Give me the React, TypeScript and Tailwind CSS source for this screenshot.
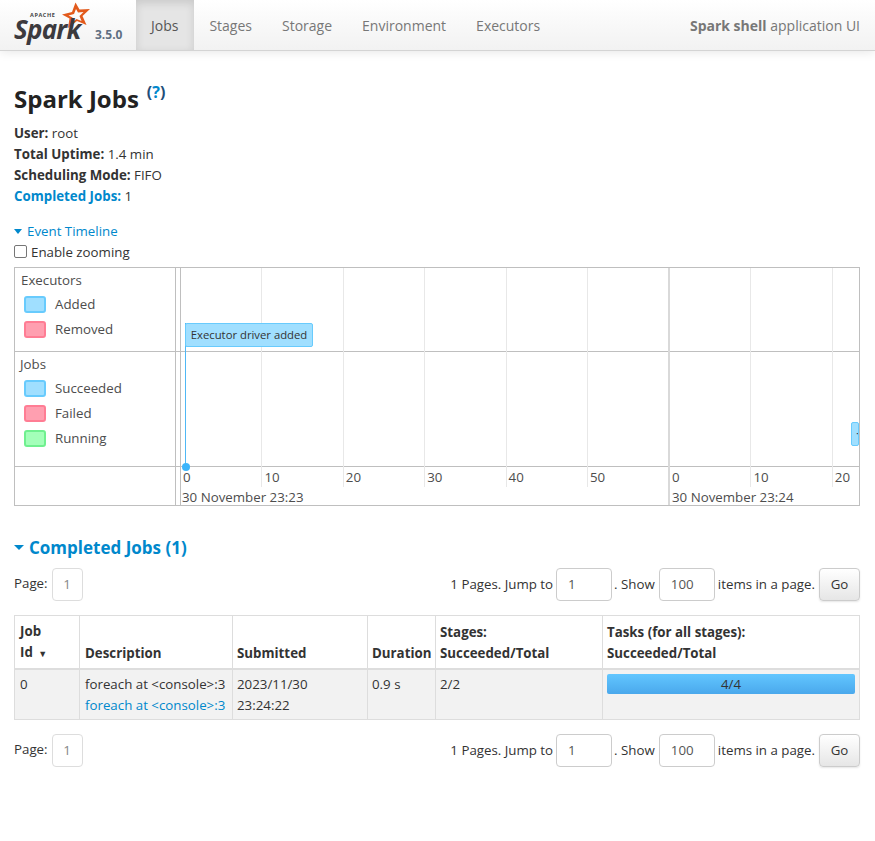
const NAV_ITEMS = ['Stages', 'Storage', 'Environment', 'Executors']

const FONT = "font-['Open_Sans','Noto_Sans',sans-serif]"

function SparkLogo() {
  return (
    <div className="relative w-[124px] h-[50px] shrink-0">
      <svg className="absolute left-[60px] top-[1px]" width="31" height="29" viewBox="0 0 31 29">
        <path
          d="M15.5 1.5 L19.5 8.5 L30 8 L22.5 15 L26.5 24 L17 20 L8 27 L9.5 17.5 L2 13.5 L12 11 Z M16 8 L14 13 L8.5 14.5 L12.5 16.5 L12 21.5 L16.5 18 L21.5 20 L19.5 15 L23.5 11 L18 11.5 Z"
          fill="#e25a1c"
          fillRule="evenodd"
        />
      </svg>
      <span className="absolute left-[30px] top-[12px] text-[5.5px] font-bold tracking-[0.6px] leading-[6px] text-[#444]">APACHE</span>
      <span className="absolute left-[14px] top-[18px] text-[26px] font-bold italic tracking-[-0.8px] leading-[22px] text-[#3c3a3e]">Spark</span>
      <span className="absolute left-[95px] top-[26px] text-[12px] font-bold leading-[18px] text-[#5f6f82]">3.5.0</span>
    </div>
  )
}

function LegendItem({ label, tone }: { label: string; tone: 'blue' | 'red' | 'green' }) {
  const swatch = {
    blue: 'bg-[#a0dfff] border-[#68cbfd]',
    red: 'bg-[#ff9fb0] border-[#ff7d94]',
    green: 'bg-[#a3ffb9] border-[#6ff08f]',
  }[tone]
  return (
    <div className="flex items-center h-[25px] pl-[9px]">
      <span className={`w-[22px] h-[17px] rounded-[3px] border-2 ${swatch}`} />
      <span className="ml-[9px]">{label}</span>
    </div>
  )
}

function Pager() {
  return (
    <div className="flex items-center justify-between text-[13.3px] text-[#333]">
      <div className="flex items-center">
        <span className="mr-[4px] -mt-[2px]">Page:</span>
        <span className="w-[31px] h-[33px] flex items-center justify-center rounded-[4px] border border-[#dddddd] text-[#888] bg-white">1</span>
      </div>
      <div className="flex items-center">
        <span>1 Pages. Jump to</span>
        <span className="ml-[3px] w-[56px] h-[33px] pl-[11px] flex items-center rounded-[4px] border border-[#cccccc] text-[#555] bg-white">1</span>
        <span className="ml-[2px]">. Show</span>
        <span className="ml-[4px] w-[56px] h-[33px] pl-[11px] flex items-center rounded-[4px] border border-[#cccccc] text-[#555] bg-white">100</span>
        <span className="ml-[3px]">items in a page.</span>
        <span className="ml-[4px] w-[41px] h-[33px] flex items-center justify-center rounded-[4px] border border-[#cccccc] bg-gradient-to-b from-white to-[#e6e6e6] shadow-[0_1px_2px_rgba(0,0,0,0.1)]">Go</span>
      </div>
    </div>
  )
}

const TICKS_A = [0, 10, 20, 30, 40, 50]
const TICKS_B = [0, 10, 20]

export default function App() {
  return (
    <div className={`${FONT} w-[875px] min-h-[841px] bg-white text-[13.3px] text-[#333]`}>
      <nav className="flex items-stretch h-[51px] border-b border-[#d4d4d4] bg-gradient-to-b from-white to-[#f2f2f2] shadow-[0_1px_10px_rgba(0,0,0,0.1)]">
        <SparkLogo />
        <div className="ml-[12px] pl-[15px] pr-[16px] flex items-center text-[14px] text-[#555] bg-[#e5e5e5] shadow-[inset_0_3px_8px_rgba(0,0,0,0.125)]">Jobs</div>
        {NAV_ITEMS.map((item) => (
          <div key={item} className="px-[15px] flex items-center text-[14px] text-[#777]">{item}</div>
        ))}
        <div className="ml-auto pr-[15px] flex items-center text-[14px] text-[#777]">
          <strong className="font-bold">Spark shell</strong>&nbsp;application UI
        </div>
      </nav>

      <main className="pl-[14px] pr-[15px]">
        <h3 className="pt-[31px] h-[72px] text-[24px] leading-[34px] font-bold text-[#222] flex items-start">
          Spark Jobs
          <span className="ml-[8px] -mt-[7px] text-[16px] font-bold text-[#1f4e79]">(<span className="text-[#0088cc]">?</span>)</span>
        </h3>

        <ul className="leading-[21px]">
          <li><strong>User:</strong> root</li>
          <li><strong>Total Uptime:</strong> 1.4 min</li>
          <li><strong>Scheduling Mode:</strong> FIFO</li>
          <li><strong className="text-[#0088cc]">Completed Jobs:</strong> 1</li>
        </ul>

        <div className="mt-[14px] flex items-center h-[21px] text-[#0088cc]">
          <span className="w-0 h-0 border-x-[4.5px] border-x-transparent border-t-[5px] border-t-[#0088cc] mr-[5px]" />
          Event Timeline
        </div>
        <label className="flex items-center h-[21px]">
          <span className="w-[13px] h-[13px] rounded-[2px] border border-[#767676] bg-white mr-[4px] -mt-[3px]" />
          Enable zooming
        </label>

        <section className="relative mt-[4px] h-[239px] border border-[#bfbfbf] text-[#4d4d4d] grid grid-cols-[161px_1fr] grid-rows-[84px_115px_1fr]">
          <div className="border-r border-b border-[#bfbfbf] pt-[2px]">
            <div className="pl-[6px] h-[22px] leading-[20px]">Executors</div>
            <LegendItem label="Added" tone="blue" />
            <LegendItem label="Removed" tone="red" />
          </div>
          <div className="border-b border-[#bfbfbf]" />
          <div className="border-r border-b border-[#bfbfbf] pt-[2px]">
            <div className="pl-[5px] h-[22px] leading-[20px]">Jobs</div>
            <LegendItem label="Succeeded" tone="blue" />
            <LegendItem label="Failed" tone="red" />
            <LegendItem label="Running" tone="green" />
          </div>
          <div className="border-b border-[#bfbfbf]" />
          <div className="border-r border-[#bfbfbf]" />
          <div />

          {/* chart overlay, items sit at their time position */}
          <div className="absolute left-[165px] top-0 bottom-0 w-px bg-[#bfbfbf]" />
          {[246, 328, 409, 491, 572, 735, 817].map((x) => (
            <div key={x} className="absolute top-0 h-[219px] w-px bg-[#e8e8e8]" style={{ left: x }} />
          ))}
          <div className="absolute left-[653px] top-0 bottom-0 w-[2px] bg-[#d9d9d9]" />
          <div className="absolute left-[170px] top-[55px] bottom-[38px] w-px bg-[#4fb8f5]" />
          <div className="absolute left-[166.5px] top-[195px] w-[8px] h-[8px] rounded-full bg-[#3db5fb]" />
          <div className="absolute left-[170px] top-[55px] h-[24px] w-[128px] flex items-center justify-center rounded-[2px] border border-[#68cbfd] bg-[#a0dfff] text-[11.3px] text-[#333] whitespace-nowrap">
            Executor driver added
          </div>
          <div className="absolute left-[836px] top-[154px] h-[24px] w-[8px] rounded-[2px] border border-[#68cbfd] bg-[#a0dfff] overflow-hidden text-[11px] leading-[20px] text-[#333] pl-[4px]">·</div>
          {TICKS_A.map((t, i) => (
            <span key={t} className="absolute top-[200px] leading-[18px]" style={{ left: 168 + i * 81.4 }}>{t}</span>
          ))}
          {TICKS_B.map((t, i) => (
            <span key={`b${t}`} className="absolute top-[200px] leading-[18px]" style={{ left: 657 + i * 81.4 }}>{t}</span>
          ))}
          <span className="absolute left-[167px] top-[220px] leading-[18px]">30 November 23:23</span>
          <span className="absolute left-[657px] top-[220px] leading-[18px]">30 November 23:24</span>
        </section>

        <h4 className="mt-[31px] flex items-center h-[21px] text-[17px] font-bold text-[#0088cc]">
          <span className="w-0 h-0 border-x-[5px] border-x-transparent border-t-[5px] border-t-[#0088cc] mr-[5px]" />
          Completed Jobs (1)
        </h4>

        <div className="mt-[10px]"><Pager /></div>

        <table className="mt-[14px] w-[846px] table-fixed border-collapse border border-[#dddddd]">
          <colgroup>
            <col className="w-[65px]" />
            <col className="w-[153px]" />
            <col className="w-[135px]" />
            <col className="w-[68px]" />
            <col className="w-[167px]" />
            <col />
          </colgroup>
          <thead>
            <tr className="h-[53px] border-b-2 border-[#dddddd] align-bottom text-left font-bold leading-[21px]">
              <th className="border-x border-[#dddddd] px-[5px] pb-[4px]">Job<br />Id <span className="ml-[2px] text-[9px] align-middle">▼</span></th>
              <th className="border-x border-[#dddddd] px-[5px] pb-[4px]">Description</th>
              <th className="border-x border-[#dddddd] px-[4px] pb-[4px]">Submitted</th>
              <th className="border-x border-[#dddddd] px-[4px] pb-[4px] whitespace-nowrap">Duration</th>
              <th className="border-x border-[#dddddd] px-[4px] pb-[4px] whitespace-nowrap">Stages:<br />Succeeded/Total</th>
              <th className="border-x border-[#dddddd] px-[4px] pb-[4px] whitespace-nowrap">Tasks (for all stages):<br />Succeeded/Total</th>
            </tr>
          </thead>
          <tbody>
            <tr className="h-[51px] bg-[#f2f2f2] align-top leading-[21px]">
              <td className="border border-[#dddddd] px-[5px] pt-[4px]">0</td>
              <td className="border border-[#dddddd] px-[5px] pt-[4px] whitespace-nowrap">
                foreach at &lt;console&gt;:3<br />
                <span className="text-[#0088cc]">foreach at &lt;console&gt;:3</span>
              </td>
              <td className="border border-[#dddddd] px-[4px] pt-[4px]">2023/11/30<br />23:24:22</td>
              <td className="border border-[#dddddd] px-[4px] pt-[4px]">0.9 s</td>
              <td className="border border-[#dddddd] px-[4px] pt-[4px]">2/2</td>
              <td className="border border-[#dddddd] px-[4px] pt-[4px]">
                <div className="h-[20px] rounded-[2px] bg-gradient-to-b from-[#62c6ff] to-[#4aa8ec] text-center leading-[20px]">4/4</div>
              </td>
            </tr>
          </tbody>
        </table>

        <div className="mt-[14px]"><Pager /></div>
      </main>
    </div>
  )
}
